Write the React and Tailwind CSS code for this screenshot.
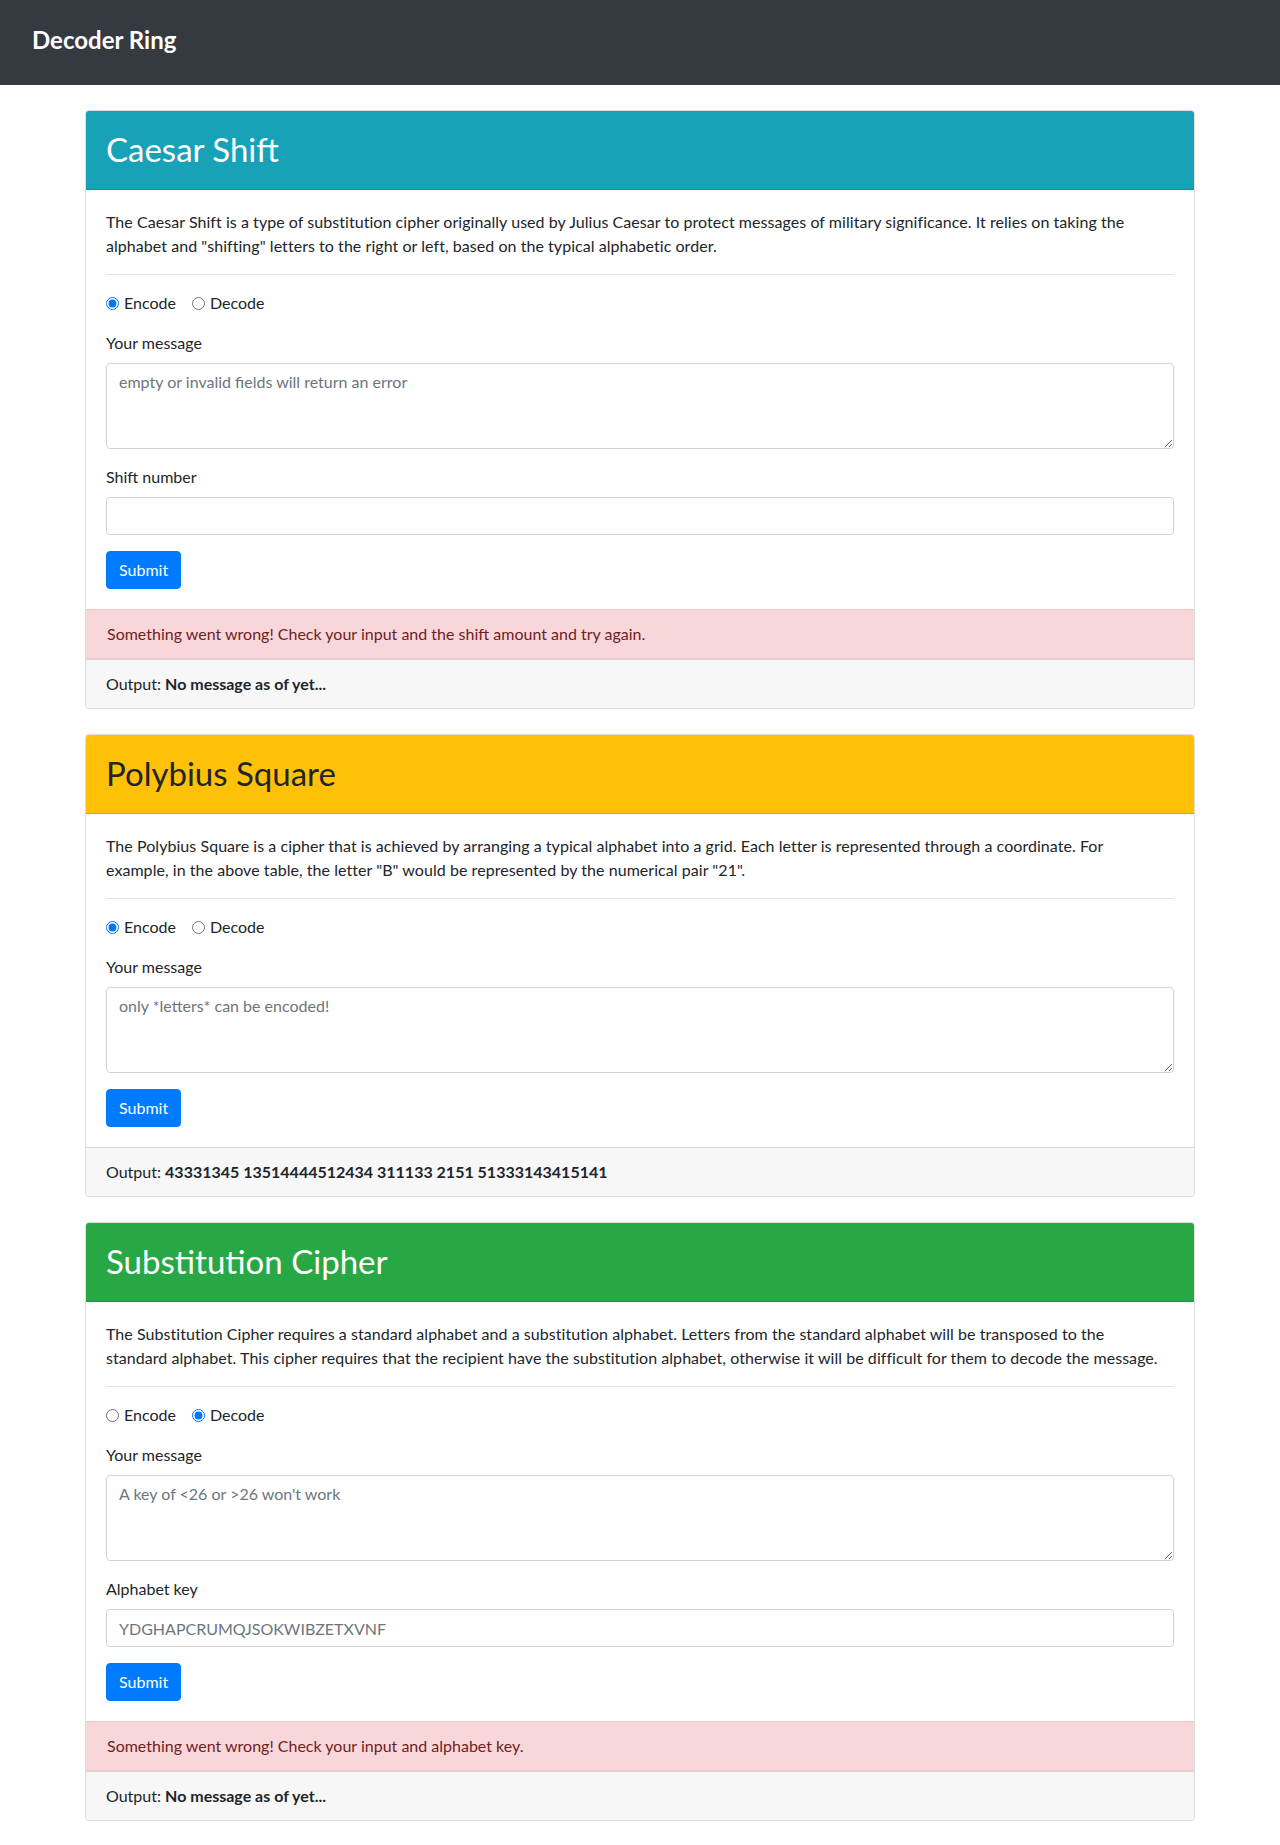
import React, { useState } from "react";

const ciphers = [
  {
    key: "caesar",
    title: "Caesar Shift",
    headerClass: "bg-[#17a2b8] text-white",
    lines: [
      "The Caesar Shift is a type of substitution cipher originally used by Julius Caesar to protect messages of military significance. It relies on taking the",
      'alphabet and "shifting" letters to the right or left, based on the typical alphabetic order.',
    ],
    mode: "encode",
    placeholder: "empty or invalid fields will return an error",
    extra: { label: "Shift number", placeholder: "" },
    error: "Something went wrong! Check your input and the shift amount and try again.",
    output: "No message as of yet...",
  },
  {
    key: "polybius",
    title: "Polybius Square",
    headerClass: "bg-[#ffc107] text-[#212529]",
    lines: [
      "The Polybius Square is a cipher that is achieved by arranging a typical alphabet into a grid. Each letter is represented through a coordinate. For",
      'example, in the above table, the letter "B" would be represented by the numerical pair "21".',
    ],
    mode: "encode",
    placeholder: "only *letters* can be encoded!",
    extra: null,
    error: null,
    output: "43331345 13514444512434 311133 2151 51333143415141",
  },
  {
    key: "substitution",
    title: "Substitution Cipher",
    headerClass: "bg-[#28a745] text-white",
    lines: [
      "The Substitution Cipher requires a standard alphabet and a substitution alphabet. Letters from the standard alphabet will be transposed to the",
      "standard alphabet. This cipher requires that the recipient have the substitution alphabet, otherwise it will be difficult for them to decode the message.",
    ],
    mode: "decode",
    placeholder: "A key of <26 or >26 won't work",
    extra: { label: "Alphabet key", placeholder: "YDGHAPCRUMQJSOKWIBZETXVNF" },
    error: "Something went wrong! Check your input and alphabet key.",
    output: "No message as of yet...",
  },
];

const CipherCard = ({ cipher }) => {
  const [mode, setMode] = useState(cipher.mode);

  return (
    <div className="mt-[25px] border border-black/[.125] rounded-[4px] bg-white overflow-hidden">
      <div className={`h-[79px] flex items-center px-5 border-b border-black/[.125] ${cipher.headerClass}`}>
        <h2 className="text-[33px] leading-[1.2] font-normal">{cipher.title}</h2>
      </div>

      <div className="p-5">
        <p className="mb-4 whitespace-nowrap tracking-[0.05px]">
          {cipher.lines[0]}
          <br />
          {cipher.lines[1]}
        </p>
        <hr className="border-0 border-t border-black/10 my-4" />

        <div className="mb-4 flex items-center h-6">
          <label className="inline-flex items-center mr-4">
            <input
              type="radio"
              name={cipher.key}
              checked={mode === "encode"}
              onChange={() => setMode("encode")}
              className="w-[13px] h-[13px] m-0"
            />
            <span className="ml-[5px]">Encode</span>
          </label>
          <label className="inline-flex items-center">
            <input
              type="radio"
              name={cipher.key}
              checked={mode === "decode"}
              onChange={() => setMode("decode")}
              className="w-[13px] h-[13px] m-0"
            />
            <span className="ml-[5px]">Decode</span>
          </label>
        </div>

        <div className="mb-4">
          <label className="block mb-2">Your message</label>
          <textarea
            rows={3}
            placeholder={cipher.placeholder}
            className="block w-full h-[86px] px-3 py-[6px] border border-[#ced4da] rounded-[4px] text-[#495057] placeholder:text-[#6c757d] outline-none"
          />
        </div>

        {cipher.extra && (
          <div className="mb-4">
            <label className="block mb-2">{cipher.extra.label}</label>
            <input
              type="text"
              placeholder={cipher.extra.placeholder}
              className="block w-full h-[38px] px-3 py-[6px] border border-[#ced4da] rounded-[4px] text-[#495057] placeholder:text-[#6c757d] outline-none"
            />
          </div>
        )}

        <button className="h-[38px] px-3 bg-[#007bff] border border-[#007bff] text-white rounded-[4px]">
          Submit
        </button>
      </div>

      {cipher.error && (
        <div className="px-5 py-3 bg-[#f8d7da] border border-[#f5c6cb] text-[#721c24] -mx-px">
          <span className="ml-px">{cipher.error}</span>
        </div>
      )}

      <div className="px-5 py-3 bg-[#f7f7f7] border-t border-black/[.125]">
        Output: <span className="font-bold">{cipher.output}</span>
      </div>
    </div>
  );
};

export default function App() {
  return (
    <div className="min-h-screen bg-white text-[#212529] text-base leading-6 font-['Lato',sans-serif]">
      <nav className="h-[85px] bg-[#343a40] flex items-center px-8 pb-[6px]">
        <span className="text-white text-2xl font-bold leading-none">Decoder Ring</span>
      </nav>

      <main className="max-w-[1140px] mx-auto px-[15px] pb-6">
        {ciphers.map((c) => (
          <CipherCard key={c.key} cipher={c} />
        ))}
      </main>
    </div>
  );
}
